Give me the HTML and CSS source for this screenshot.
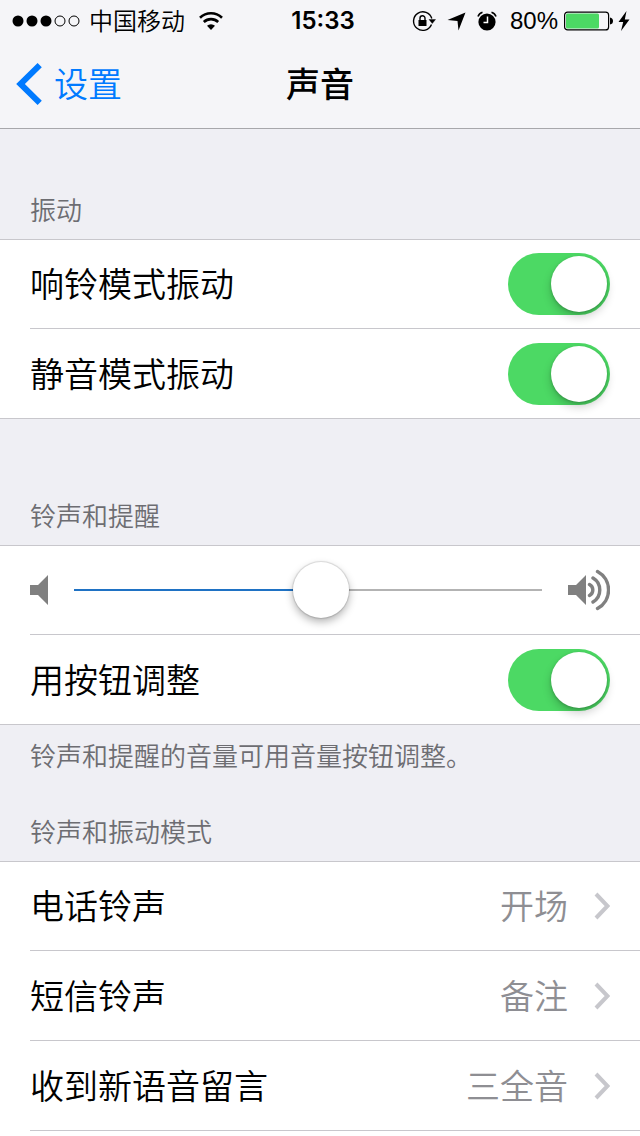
FILE: index.html
```html
<!DOCTYPE html>
<html lang="zh-CN">
<head>
  <meta charset="UTF-8">
  <meta name="viewport" content="width=device-width, initial-scale=1">
  <title>声音</title>
  <link rel="stylesheet" href="styles.css">
</head>
<body>
  <header class="top">
    <div class="status-bar">
      <div class="status-left">
        <svg class="signal" width="68" height="12" viewBox="0 0 68 12">
          <circle cx="6" cy="6" r="5.5"/>
          <circle cx="20" cy="6" r="5.5"/>
          <circle cx="34" cy="6" r="5.5"/>
          <circle cx="48" cy="6" r="5" fill="none" stroke="#000"/>
          <circle cx="62" cy="6" r="5" fill="none" stroke="#000"/>
        </svg>
        <span class="carrier">中国移动</span>
        <svg class="wifi" width="24" height="18" viewBox="0 0 24 18">
          <path d="M1 5.700a16 16 0 0 1 22 0M4.800 10a10.500 10.500 0 0 1 14.400 0" fill="none" stroke="#000" stroke-width="2.600"/>
          <path d="M12 18l-4-4.200a5.800 5.800 0 0 1 8 0z"/>
        </svg>
      </div>
      <span class="time">15:33</span>
      <div class="status-right">
        <svg width="24" height="22" viewBox="0 0 24 22">
          <path d="M19.5 14.5a9.3 9.3 0 1 1 .3-6" fill="none" stroke="#000" stroke-width="1.4"/>
          <path d="M17 9.500h6.500l-3.250 4z" stroke="#000" stroke-width=".4"/>
          <path d="M6.500 10h8v6h-8z"/>
          <path d="M8 10.500V8.200a2.500 2.500 0 0 1 5 0v2.300" fill="none" stroke="#000" stroke-width="1.400"/>
        </svg>
        <svg class="location" width="19" height="19" viewBox="0 0 19 19">
          <path d="M18.500 .5L11.500 18.500l-1-9.500L.5 8z"/>
        </svg>
        <svg class="alarm" width="20" height="20" viewBox="0 0 20 20">
          <circle cx="10" cy="11" r="8.600"/>
          <path d="M1 5.500Q2 2.200 5.500 1.200M19 5.500Q18 2.200 14.500 1.200" fill="none" stroke="#000" stroke-width="1.600"/>
          <path d="M10.500 5.500v6h-4" fill="none" stroke="#fff" stroke-width="1.500"/>
        </svg>
        <span class="percent">80%</span>
        <svg class="battery" width="50" height="20" viewBox="0 0 50 20">
          <rect x=".6" y="1.100" width="44" height="17.800" rx="3" fill="none" stroke="#000" stroke-width="1.200"/>
          <rect x="2" y="2.500" width="33" height="15" rx="1.500" fill="#4cd964"/>
          <path d="M46 6.500q3 .5 3 3.500t-3 3.500z"/>
        </svg>
        <svg class="bolt" width="12" height="20" viewBox="0 0 12 20">
          <path d="M8.500 0L.5 11h4.700L3 20l8.500-11.500H6.800z"/>
        </svg>
      </div>
    </div>
    <nav class="nav-bar">
      <a class="back" href="#">
        <svg width="26" height="42" viewBox="0 0 26 42">
          <path d="M23.700 2.200L4.500 21l19.200 18.800" fill="none" stroke="#007aff" stroke-width="6"/>
        </svg>
        <span class="text">设置</span>
      </a>
      <h1 class="title text">声音</h1>
    </nav>
  </header>

  <main class="content">
    <h2 class="group-title first">振动</h2>
    <ul class="group">
      <li class="row">
        <label class="text" for="ringVibrate">响铃模式振动</label>
        <input class="switch" type="checkbox" id="ringVibrate" checked>
      </li>
      <li class="row">
        <label class="text" for="silentVibrate">静音模式振动</label>
        <input class="switch" type="checkbox" id="silentVibrate" checked>
      </li>
    </ul>

    <h2 class="group-title second">铃声和提醒</h2>
    <ul class="group">
      <li class="row">
        <svg width="18" height="30" viewBox="0 0 18 30">
          <path d="M0 10h8L18 0v30L8 20H0z" fill="#808080"/>
        </svg>
        <input class="volume" type="range" min="0" max="1000" value="532" aria-label="音量">
        <svg width="42" height="42" viewBox="0 0 42 42">
          <path d="M0 16h8L18 6v30L8 26H0z" fill="#808080"/>
          <path d="M21.500 15.500a6.200 6.200 0 0 1 0 11M25 9a14 14 0 0 1 0 24M29.500 2.500a21 21 0 0 1 0 37" fill="none" stroke="#808080" stroke-width="3.400" stroke-linecap="round"/>
        </svg>
      </li>
      <li class="row">
        <label class="text" for="useButtons">用按钮调整</label>
        <input class="switch" type="checkbox" id="useButtons" checked>
      </li>
    </ul>
    <p class="note">铃声和提醒的音量可用音量按钮调整。</p>

    <h2 class="group-title">铃声和振动模式</h2>
    <ul class="group open">
      <li>
        <a class="row" href="#">
          <span class="text">电话铃声</span>
          <span class="text value">开场</span>
          <svg class="arrow" width="16" height="28" viewBox="0 0 16 28"><path d="M2 2l11.500 12L2 26"/></svg>
        </a>
      </li>
      <li>
        <a class="row" href="#">
          <span class="text">短信铃声</span>
          <span class="text value">备注</span>
          <svg class="arrow" width="16" height="28" viewBox="0 0 16 28"><path d="M2 2l11.500 12L2 26"/></svg>
        </a>
      </li>
      <li>
        <a class="row" href="#">
          <span class="text">收到新语音留言</span>
          <span class="text value">三全音</span>
          <svg class="arrow" width="16" height="28" viewBox="0 0 16 28"><path d="M2 2l11.500 12L2 26"/></svg>
        </a>
      </li>
    </ul>
  </main>
</body>
</html>
```
FILE: styles.css
```css
* {
  box-sizing: border-box;
}
body {
  margin: 0;
  min-height: 100vh;
  display: flex;
  flex-direction: column;
  background: #efeff4;
  color: #000;
  font-family: "Noto Sans CJK SC", sans-serif;
  font-size: 34px;
  font-weight: 350;
}
svg {
  display: block;
  flex: none;
}
a {
  color: inherit;
  text-decoration: none;
}

/* status bar + navigation */
.top {
  background: #f5f5f8;
  border-bottom: 1px solid #a7a7ab;
}
.status-bar {
  height: 40px;
  padding: 1px 10px 0 12px;
  display: grid;
  grid-template-columns: 1fr auto 1fr;
  align-items: center;
  font-size: 24px;
  line-height: 38px;
}
.status-left,
.status-right {
  display: flex;
  align-items: center;
}
.status-right {
  justify-content: flex-end;
}
.carrier {
  margin: 0 14px 0 9px;
  padding-bottom: 2px;
}
.time {
  padding-left: 4px;
  font-family: Inter, sans-serif;
  font-weight: 600;
}
.percent {
  font-family: "Liberation Sans", Arial, sans-serif;
  font-weight: 400;
}
.location {
  margin-left: 11px;
}
.alarm {
  margin: 0 13px 0 11px;
}
.battery {
  margin: 0 4px 0 6px;
}
.nav-bar {
  height: 88px;
  padding: 0 16px;
  display: grid;
  grid-template-columns: 1fr auto 1fr;
  align-items: center;
}
.back {
  display: flex;
  align-items: center;
  gap: 12px;
  color: #007aff;
}
.title {
  margin: 0;
  font-size: 34px;
  font-weight: 500;
}

/* groups */
.content {
  flex: 1;
  display: flex;
  flex-direction: column;
}
.group-title,
.note {
  margin: 0;
  padding: 40px 30px 12px;
  color: #6d6d72;
  font-size: 26px;
  font-weight: 350;
  line-height: 36px;
}
.group-title.first {
  padding-top: 62px;
}
.group-title.second {
  padding-top: 78px;
}
.note {
  padding: 12px 30px 0;
}
.group {
  margin: 0;
  padding: 0 0 0 30px;
  list-style: none;
  background: #fff;
  border-top: 1px solid #c8c7cc;
  border-bottom: 1px solid #c8c7cc;
}
.group.open {
  flex: 1;
  border-bottom: none;
}
.group li {
  height: 90px;
  border-bottom: 1px solid #c8c7cc;
}
.group li:first-child {
  height: 89px;
}
.group:not(.open) li:last-child {
  height: 89px;
  border-bottom: none;
}
.row {
  display: flex;
  align-items: center;
  justify-content: space-between;
  padding-right: 30px;
}
a.row {
  height: 100%;
}
.text {
  padding-bottom: 2px;
  line-height: 48px;
}
.value {
  margin-left: auto;
  color: #8e8e93;
}
.arrow {
  margin-left: 26px;
  fill: none;
  stroke: #c7c7cc;
  stroke-width: 4;
}

/* switch */
.switch {
  appearance: none;
  flex: none;
  width: 102px;
  height: 62px;
  margin: 0;
  padding: 3px;
  display: flex;
  border-radius: 31px;
  background: #e5e5ea;
}
.switch::before {
  content: "";
  width: 56px;
  height: 56px;
  border-radius: 50%;
  background: #fff;
  box-shadow: 0 5px 10px rgba(0, 0, 0, 0.2), 0 1px 3px rgba(0, 0, 0, 0.2);
}
.switch:checked {
  justify-content: flex-end;
  background: #4cd964;
}

/* volume slider */
.volume {
  appearance: none;
  flex: 1;
  min-width: 0;
  height: 58px;
  margin: 0 26px;
  background: linear-gradient(to right, #1f72c4 53%, #b3b3b3 53%) center / 100% 2px no-repeat;
}
.volume::-webkit-slider-thumb {
  appearance: none;
  width: 56px;
  height: 56px;
  border-radius: 50%;
  background: #fff;
  box-shadow: 0 0 1px 1px rgba(0, 0, 0, 0.12), 0 4px 8px rgba(0, 0, 0, 0.3);
}
```
